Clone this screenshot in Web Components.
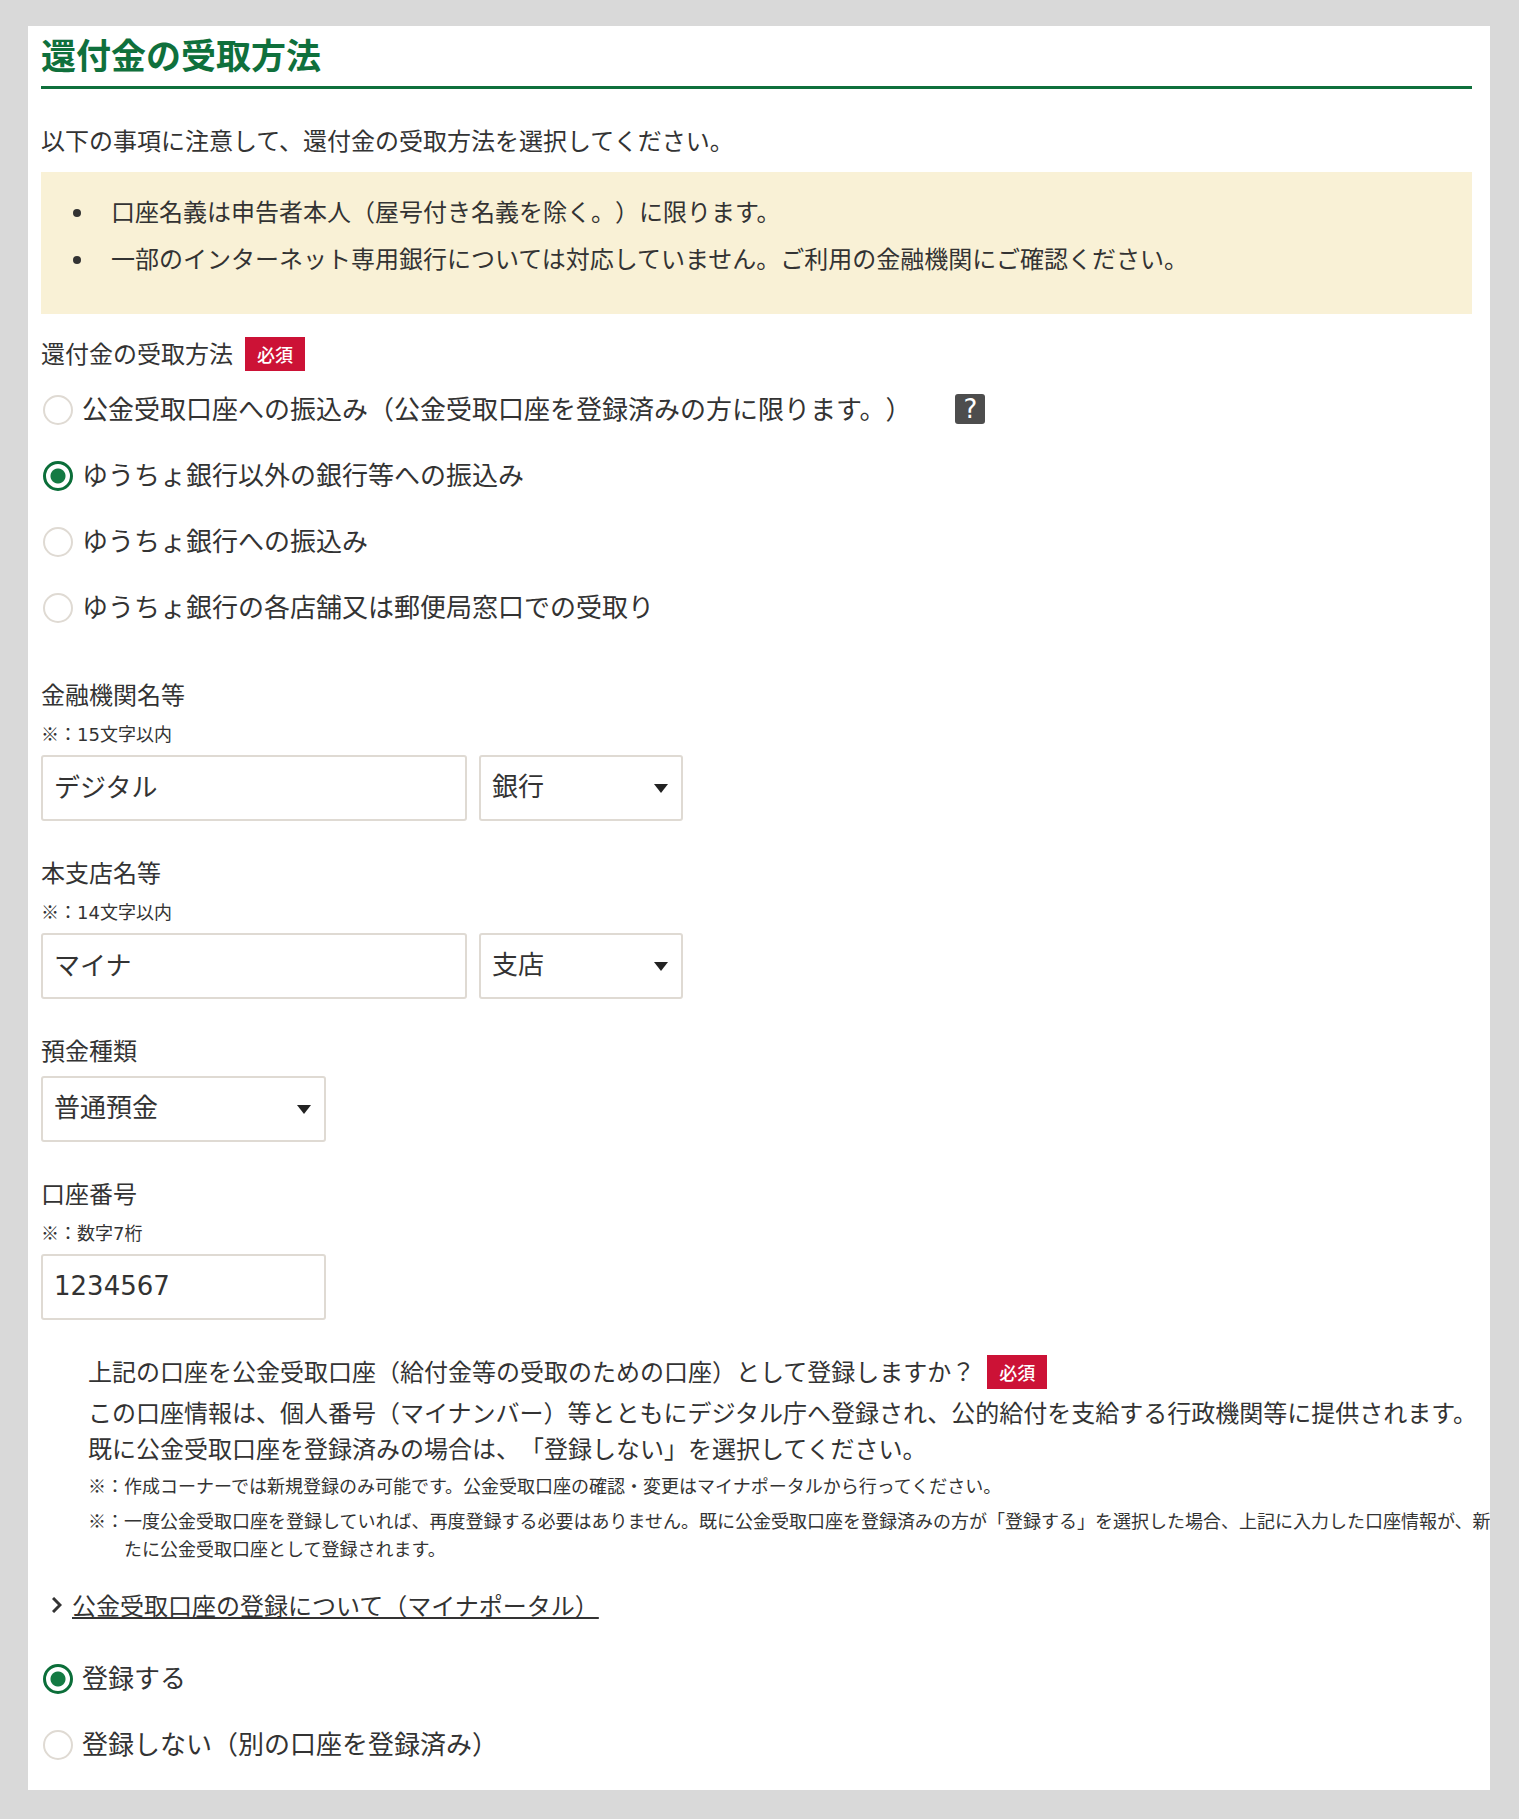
<!DOCTYPE html>
<html lang="ja">
<head>
<meta charset="utf-8">
<meta name="viewport" content="width=device-width, initial-scale=1">
<title>還付金の受取方法</title>
<style>
	body{
		margin: 26px 29px 29px 28px;
		background: #d9d9d9;
		color: #333;
		font: 24px/36px "Noto Sans CJK JP", sans-serif;
		text-spacing-trim: space-all;
	}
	p{ margin: 0; }
	.intro{ margin: 33px 0 14px; }
	.method{ margin-top: 23px; }
	.fields{
		display: grid;
		gap: 33px;
		margin: 53px 0 35px;
	}
	.register{ margin-left: 47px; }
	.register p{ margin: 5px 0 5px; white-space: nowrap; }
	.num{
		font-family: "DejaVu Sans", sans-serif;
		line-height: 18px;
	}
</style>
</head>
<body>

<form-panel heading="還付金の受取方法">
	<p class="intro">以下の事項に注意して、還付金の受取方法を選択してください。</p>

	<notice-box>
		<li>口座名義は申告者本人（屋号付き名義を除く。）に限ります。</li>
		<li>一部のインターネット専用銀行については対応していません。ご利用の金融機関にご確認ください。</li>
	</notice-box>

	<radio-list class="method" name="method" checked="other">
		<required-label slot="legend">還付金の受取方法</required-label>
		<span slot="public" data-help="公金受取口座について">公金受取口座への振込み（公金受取口座を登録済みの方に限ります。）</span>
		<span slot="other">ゆうちょ銀行以外の銀行等への振込み</span>
		<span slot="yucho">ゆうちょ銀行への振込み</span>
		<span slot="counter">ゆうちょ銀行の各店舗又は郵便局窓口での受取り</span>
	</radio-list>

	<div class="fields">
		<form-field label="金融機関名等" value="デジタル" options="銀行,信用金庫,信用組合,農協">
			<span slot="hint">※：<span class="num">15</span>文字以内</span>
		</form-field>
		<form-field label="本支店名等" value="マイナ" options="支店,本店,出張所">
			<span slot="hint">※：<span class="num">14</span>文字以内</span>
		</form-field>
		<form-field label="預金種類" options="普通預金,当座預金,貯蓄預金" short></form-field>
		<form-field label="口座番号" value="1234567" short>
			<span slot="hint">※：数字<span class="num">7</span>桁</span>
		</form-field>
	</div>

	<div class="register">
		<required-label>上記の口座を公金受取口座（給付金等の受取のための口座）として登録しますか？</required-label>
		<p>この口座情報は、個人番号（マイナンバー）等とともにデジタル庁へ登録され、公的給付を支給する行政機関等に提供されます。<br>既に公金受取口座を登録済みの場合は、「登録しない」を選択してください。</p>
		<note-item>作成コーナーでは新規登録のみ可能です。公金受取口座の確認・変更はマイナポータルから行ってください。</note-item>
		<note-item>一度公金受取口座を登録していれば、再度登録する必要はありません。既に公金受取口座を登録済みの方が「登録する」を選択した場合、上記に入力した口座情報が、新<br>たに公金受取口座として登録されます。</note-item>
	</div>

	<arrow-link href="#about">公金受取口座の登録について（マイナポータル）</arrow-link>

	<radio-list name="register" checked="yes">
		<span slot="yes">登録する</span>
		<span slot="no">登録しない（別の口座を登録済み）</span>
	</radio-list>
</form-panel>

<script>
class FormPanel extends HTMLElement{
	connectedCallback(){
		this.attachShadow({mode: 'open'}).innerHTML = `
		<style>
			:host{
				display: block;
				padding: 6px 18px 30px 13px;
				background: #fff;
			}
			h1{
				margin: 0;
				padding-bottom: 10px;
				border-bottom: 3px solid #0f703c;
				color: #0f703c;
				font-size: 35px;
				line-height: 44px;
				font-weight: 700;
			}
		</style>
		<main>
			<h1>${this.getAttribute('heading')}</h1>
			<slot></slot>
		</main>
		`;
	}
}

class NoticeBox extends HTMLElement{
	connectedCallback(){
		this.attachShadow({mode: 'open'}).innerHTML = `
		<style>
			:host{
				display: block;
				padding: 21px 24px 38px 36px;
				background: #f9f1d6;
			}
			ul{
				display: grid;
				gap: 11px;
				margin: 0;
				padding: 0;
				list-style: none;
			}
			li{
				display: grid;
				grid-template-columns: 34px 1fr;
				align-items: center;
			}
			li::before{
				content: "";
				margin: 3px 0 0 -4px;
				width: 8px;
				height: 8px;
				border-radius: 50%;
				background: #333;
			}
		</style>
		<ul></ul>
		`;
		// move every item into the list, so the bullets are drawn by this element
		var ul = this.shadowRoot.querySelector('ul');
		this.querySelectorAll('li').forEach(function(li){ ul.appendChild(li); });
	}
}

class RequiredLabel extends HTMLElement{
	connectedCallback(){
		this.attachShadow({mode: 'open'}).innerHTML = `
		<style>
			:host{
				display: flex;
				align-items: center;
				gap: 12px;
				height: 34px;
				white-space: nowrap;
			}
			span{ padding-bottom: 2px; }
			b{
				padding: 0 12px;
				background: #cc1236;
				color: #fff;
				font-size: 18px;
				line-height: 34px;
				font-weight: 500;
			}
		</style>
		<span><slot></slot></span><b>必須</b>
		`;
	}
}

class RadioList extends HTMLElement{
	connectedCallback(){
		var name = this.getAttribute('name');
		var checked = this.getAttribute('checked');
		var rows = '';

		this.querySelectorAll('span[slot]').forEach(function(item){
			var value = item.slot;
			var help = item.dataset.help;
			rows += `
			<div class="row">
				<label>
					<input type="radio" name="${name}" value="${value}"${value === checked ? ' checked' : ''}>
					<slot name="${value}"></slot>
				</label>
				${help ? `<button type="button" title="${help}">?</button>` : ''}
			</div>`;
		});

		this.attachShadow({mode: 'open'}).innerHTML = `
		<style>
			:host{ display: block; }
			fieldset{
				margin: 0;
				padding: 0;
				border: 0;
				min-width: 0;
			}
			legend{ padding: 0 0 24px; }
			.rows{
				display: grid;
				gap: 36px;
			}
			.row{
				display: flex;
				align-items: center;
				gap: 44px;
				height: 30px;
				font-size: 26px;
				line-height: 30px;
			}
			label{
				display: flex;
				align-items: center;
				gap: 9px;
				white-space: nowrap;
			}
			::slotted(span){ padding-bottom: 5px; }
			input{
				appearance: none;
				flex: none;
				box-sizing: border-box;
				width: 30px;
				height: 30px;
				margin: 0 0 0 2px;
				border: 2px solid #dfdad3;
				border-radius: 50%;
				background: #fff;
			}
			input:checked{
				border: 3px solid #0b6e39;
				background: radial-gradient(circle, #147a43 7px, #fff 8px);
			}
			button{
				width: 30px;
				height: 30px;
				margin-bottom: 3px;
				padding: 0;
				border: 0;
				border-radius: 3px;
				background: #4d4d4d;
				color: #fff;
				font: 26px/30px "DejaVu Sans", sans-serif;
			}
		</style>
		<fieldset>
			${this.querySelector('[slot=legend]') ? '<legend><slot name="legend"></slot></legend>' : ''}
			<div class="rows">${rows}</div>
		</fieldset>
		`;
	}
}

class FormField extends HTMLElement{
	connectedCallback(){
		var label = this.getAttribute('label');
		var value = this.getAttribute('value');
		var options = this.getAttribute('options');
		var controls = '';

		if (value !== null) {
			controls += `<input id="control" type="text" value="${value}">`;
		}
		if (options !== null) {
			controls += `<select ${value === null ? 'id="control"' : `aria-label="${label}の種別"`}>` +
			options.split(',').map(function(o){ return `<option>${o}</option>`; }).join('') +
			`</select>`;
		}

		this.attachShadow({mode: 'open'}).innerHTML = `
		<style>
			:host{ display: block; }
			label{
				display: block;
				margin-bottom: 8px;
			}
			.hint{
				margin-bottom: 9px;
				font-size: 18px;
				line-height: 26px;
			}
			.controls{
				display: flex;
				gap: 12px;
			}
			input, select{
				box-sizing: border-box;
				height: 66px;
				margin: 0;
				padding: 0 10px 6px 11px;
				border: 2px solid #dfdad3;
				border-radius: 3px;
				background: #fff;
				color: #333;
				font: 26px/36px "Noto Sans CJK JP", sans-serif;
			}
			input{ width: 426px; }
			select{
				appearance: none;
				width: 204px;
				background: #fff url("data:image/svg+xml,%3Csvg xmlns='http://www.w3.org/2000/svg' width='14' height='9'%3E%3Cpath d='M0 0h14L7 9z' fill='%23222'/%3E%3C/svg%3E") no-repeat right 13px center;
			}
			:host([short]) input, :host([short]) select{ width: 285px; }
			:host([short]) input{
				padding-bottom: 2px;
				font-family: "DejaVu Sans", sans-serif;
			}
		</style>
		<label for="control">${label}</label>
		${this.querySelector('[slot=hint]') ? '<div class="hint"><slot name="hint"></slot></div>' : ''}
		<div class="controls">${controls}</div>
		`;
	}
}

class NoteItem extends HTMLElement{
	connectedCallback(){
		this.attachShadow({mode: 'open'}).innerHTML = `
		<style>
			:host{
				display: flex;
				margin-bottom: 7px;
				font-size: 18px;
				line-height: 28px;
				white-space: nowrap;
			}
		</style>
		<span>※：</span><span><slot></slot></span>
		`;
	}
}

class ArrowLink extends HTMLElement{
	connectedCallback(){
		this.attachShadow({mode: 'open'}).innerHTML = `
		<style>
			:host{
				display: flex;
				align-items: center;
				gap: 10px;
				margin: 25px 0 41px;
				padding-left: 11px;
			}
			svg{ flex: none; }
			a{
				color: inherit;
				text-decoration-thickness: 2px;
				text-underline-offset: 2px;
				text-decoration-skip-ink: none;
			}
		</style>
		<svg width="10" height="16" viewBox="0 0 10 16" fill="none" stroke="#333" stroke-width="3"><path d="M1 1l7 7-7 7"/></svg>
		<a href="${this.getAttribute('href')}"><slot></slot></a>
		`;
	}
}

window.customElements.define("form-panel", FormPanel);
window.customElements.define("notice-box", NoticeBox);
window.customElements.define("required-label", RequiredLabel);
window.customElements.define("radio-list", RadioList);
window.customElements.define("form-field", FormField);
window.customElements.define("note-item", NoteItem);
window.customElements.define("arrow-link", ArrowLink);
</script>
</body>
</html>
